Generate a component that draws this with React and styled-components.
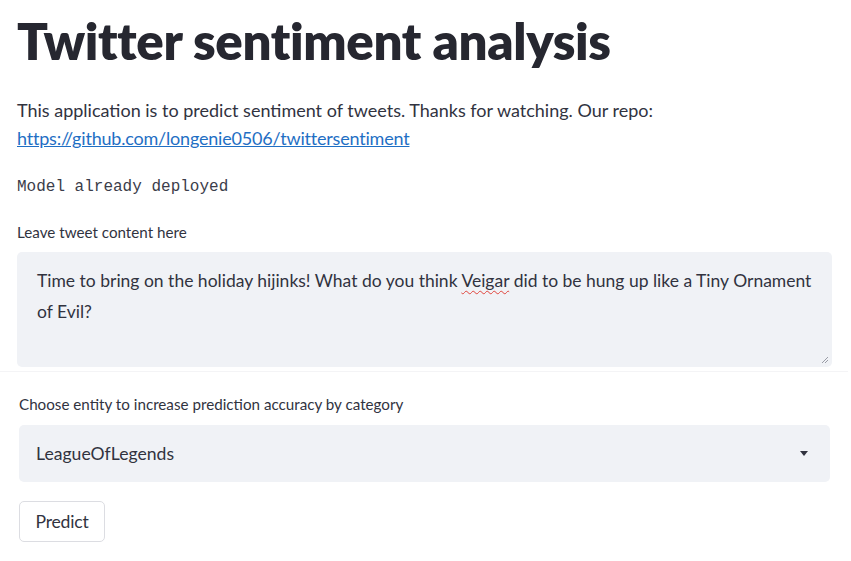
import React from "react";
import styled, { createGlobalStyle } from "styled-components";

const Global = createGlobalStyle`
  html, body { margin: 0; padding: 0; background: #ffffff; }
  body { font-family: Lato, "Noto Sans", sans-serif; color: #31333f; }
`;

const Page = styled.main`
  width: 851px;
  height: 561px;
  box-sizing: border-box;
  padding: 8px 20px 0 17px;
  display: flex;
  flex-direction: column;
  overflow: hidden;
`;

const Title = styled.h1`
  margin: 0;
  font-family: Lato, "Noto Sans", sans-serif;
  font-weight: 800;
  font-size: 51px;
  line-height: 66px;
  color: #262730;
  letter-spacing: -0.35px;
`;

const Intro = styled.p`
  margin: 22px 0 0;
  font-size: 18px;
  line-height: 28px;
  color: #31333f;
`;

const Link = styled.a`
  color: #1f6fc4;
  text-decoration: underline;
  letter-spacing: -0.2px;
`;

const Code = styled.pre`
  margin: 25px 0 0;
  font-family: "Liberation Mono", "DejaVu Sans Mono", monospace;
  font-size: 16px;
  line-height: 20px;
  color: #3b3d4a;
`;

const Field = styled.div`
  display: flex;
  flex-direction: column;
  margin-top: ${(p) => p.$top}px;
  margin-left: ${(p) => p.$indent || 0}px;
`;

const Label = styled.label`
  font-size: 15.2px;
  line-height: 18px;
  color: #31333f;
  margin-bottom: ${(p) => p.$gap}px;
`;

const Area = styled.div`
  position: relative;
  width: 815px;
  height: 115px;
  box-sizing: border-box;
  background: #f0f2f6;
  border-radius: 5px;
  padding: 13px 16px 13px 20px;
  font-size: 17.5px;
  line-height: 31px;
  color: #31333f;
`;

const Squiggle = styled.span`
  text-decoration: underline wavy #e0443c;
  text-decoration-thickness: 1px;
  text-underline-offset: 3px;
`;

const Grip = styled.svg`
  position: absolute;
  right: 3px;
  bottom: 3px;
`;

const Divider = styled.div`
  height: 1px;
  margin: 4px -17px 0 -17px;
  background: #f4f4f6;
`;

const Select = styled.div`
  width: 811px;
  height: 57px;
  box-sizing: border-box;
  background: #f0f2f6;
  border-radius: 5px;
  padding: 0 22px 0 17px;
  display: flex;
  align-items: center;
  justify-content: space-between;
  font-size: 17.6px;
  color: #31333f;
`;

const Button = styled.button`
  align-self: flex-start;
  margin: 19px 0 0 2px;
  width: 86px;
  height: 41px;
  border: 1px solid #dcdde2;
  border-radius: 5px;
  background: #ffffff;
  font-family: Lato, "Noto Sans", sans-serif;
  font-size: 17.6px;
  letter-spacing: -0.2px;
  color: #31333f;
  padding: 0;
`;

export default function App() {
  return (
    <>
      <Global />
      <Page>
        <Title>Twitter sentiment analysis</Title>
        <Intro>
          This application is to predict sentiment of tweets. Thanks for watching. Our repo:
          <br />
          <Link href="#">https://github.com/longenie0506/twittersentiment</Link>
        </Intro>
        <Code>Model already deployed</Code>
        <Field $top={26}>
          <Label $gap={11}>Leave tweet content here</Label>
          <Area>
            Time to bring on the holiday hijinks! What do you think <Squiggle>Veigar</Squiggle> did to be
            hung up like a Tiny Ornament of Evil?
            <Grip width="9" height="9" viewBox="0 0 9 9">
              <path d="M8 2 L2 8 M8 5 L5 8" stroke="#9a9ca6" strokeWidth="1" />
            </Grip>
          </Area>
        </Field>
        <Divider />
        <Field $top={23} $indent={2}>
          <Label $gap={12}>Choose entity to increase prediction accuracy by category</Label>
          <Select>
            <span>LeagueOfLegends</span>
            <svg width="8" height="5" viewBox="0 0 8 5">
              <path d="M0 0 L8 0 L4 5 Z" fill="#31333f" />
            </svg>
          </Select>
        </Field>
        <Button>Predict</Button>
      </Page>
    </>
  );
}
